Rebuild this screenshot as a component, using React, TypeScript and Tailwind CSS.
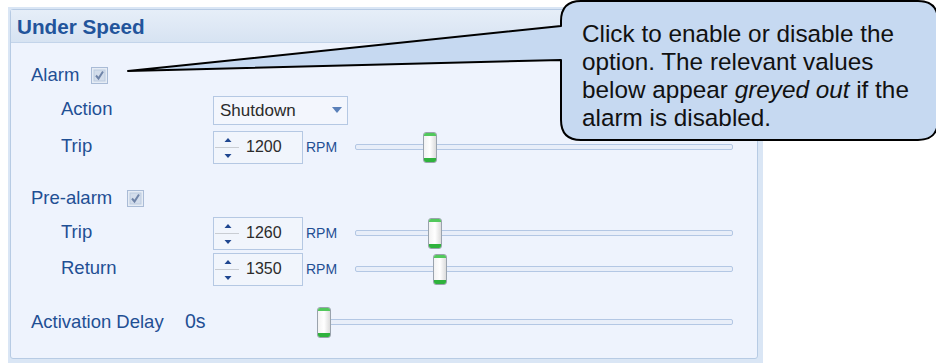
const LABEL = "text-[18.5px] leading-none text-[#1f4f94] whitespace-nowrap";
const VALUE = "text-[#2b2b2b] leading-none whitespace-nowrap";

function Checkbox({ className }: { className?: string }) {
  return (
    <svg width="17" height="17" viewBox="0 0 17 17" className={className}>
      <rect x="0.5" y="0.5" width="16" height="16" fill="#e6ecf5" stroke="#a9bbd6" />
      <rect x="3" y="3" width="11" height="11" fill="#d3ddeb" stroke="#bccbe0" />
      <path d="M5 8.5 L7.5 11.5 L12 4.5" fill="none" stroke="#6f84a8" strokeWidth="2" />
    </svg>
  );
}

function SpinBox({ value }: { value: string }) {
  return (
    <div className="flex h-[33px] w-[90px] items-center border border-[#b5c8e3] bg-[#f1f5fc]">
      <svg width="26" height="31" viewBox="0 0 26 31">
        <line x1="1" y1="15.5" x2="25" y2="15.5" stroke="#c9cdd3" />
        <polygon points="10.5,10 17.5,10 14,6" fill="#1f4690" />
        <polygon points="10.5,22 17.5,22 14,26" fill="#1f4690" />
      </svg>
      <span className={`${VALUE} ml-[6px] text-[16px]`}>{value}</span>
    </div>
  );
}

function Dropdown({ value }: { value: string }) {
  return (
    <div className="flex h-[29px] w-[135px] items-center justify-between border border-[#b5c8e3] bg-[#f3f6fd] pl-[6px] pr-[5px]">
      <span className={`${VALUE} text-[17px]`}>{value}</span>
      <svg width="10" height="6" viewBox="0 0 10 6">
        <polygon points="0,0 10,0 5,6" fill="#5a80b9" />
      </svg>
    </div>
  );
}

function Slider({ className, offset }: { className: string; offset: number }) {
  return (
    <div className={`relative flex h-[31px] items-center ${className}`}>
      <div className="h-[6px] w-full rounded-[2px] border border-[#b3c7e4] bg-[#e8eef9]" />
      <div
        className="absolute top-0 flex h-[31px] w-[14px] flex-col justify-between overflow-hidden rounded-[3px] border border-[#9aa3ad] bg-linear-to-r from-[#f2f2f2] via-[#ffffff] to-[#dcdcdc]"
        style={{ left: offset }}
      >
        <div className="h-[3px] bg-[#52c85c]" />
        <div className="h-[4px] bg-[#2fb23d]" />
      </div>
    </div>
  );
}

function Row({
  label,
  sub,
  className,
  children,
}: {
  label: string;
  sub?: boolean;
  className: string;
  children?: React.ReactNode;
}) {
  return (
    <div className={`flex items-center ${className}`}>
      <div className={`w-[202px] ${sub ? "pl-[50px]" : "pl-[20px]"}`}>
        <span className={LABEL}>{label}</span>
      </div>
      {children}
    </div>
  );
}

function RpmRow({ label, value, offset, className }: { label: string; value: string; offset: number; className: string }) {
  return (
    <Row label={label} sub className={`h-[34px] ${className}`}>
      <SpinBox value={value} />
      <span className="ml-[3px] w-[31px] text-[14px] leading-none text-[#1f4f94]">RPM</span>
      <Slider className="ml-[18px] w-[378px]" offset={offset} />
    </Row>
  );
}

export default function App() {
  return (
    <div className="relative h-[363px] w-[936px] overflow-hidden bg-white pl-[8px] pt-[7px] font-['Liberation_Sans',Arial,sans-serif]">
      <div className="h-[356px] w-[755px] bg-[#dae6f5] pb-[4px] pl-[2px] pr-[5px] pt-[2px]">
        <div className="flex h-[350px] w-[748px] flex-col rounded-[3px] border border-[#b7cbe4] bg-[#eef3fd]">
          <div className="flex h-[33px] items-center border-b border-[#c3d4ea] bg-linear-to-b from-[#e6eef8] to-[#d7e3f2] pl-[6px] pt-[2px]">
            <span className="text-[20.7px] font-bold leading-none text-[#22549b]">Under Speed</span>
          </div>

          <div className="mt-[16px] flex h-[32px] items-center pl-[20px]">
            <span className={LABEL}>Alarm</span>
            <Checkbox className="ml-[12px]" />
          </div>

          <Row label="Action" sub className="mt-[4px] h-[30px]">
            <Dropdown value="Shutdown" />
          </Row>

          <RpmRow label="Trip" value="1200" offset={68} className="mt-[5px]" />

          <div className="mt-[18px] flex h-[32px] items-center pl-[20px]">
            <span className={LABEL}>Pre-alarm</span>
            <Checkbox className="ml-[15px]" />
          </div>

          <RpmRow label="Trip" value="1260" offset={73} className="mt-[2px]" />
          <RpmRow label="Return" value="1350" offset={78} className="mt-[2px]" />

          <div className="mt-[19px] flex h-[34px] items-center pl-[20px]">
            <span className={`${LABEL} w-[154px]`}>Activation Delay</span>
            <span className={`${LABEL} w-[132px] text-[19.5px]`}>0s</span>
            <Slider className="w-[416px]" offset={0} />
          </div>
        </div>
      </div>

      <svg className="pointer-events-none absolute left-0 top-0" width="936" height="363" viewBox="0 0 936 363">
        <path
          d="M128 71 L561 26 L561 21 Q561 1 581 1 L918 1 Q938 1 938 21 L938 120 Q938 140 918 140 L581 140 Q561 140 561 120 L561 60 Z"
          fill="#c6d9f1"
          stroke="#000"
          strokeWidth="2"
          strokeLinejoin="round"
        />
      </svg>
      <div className="absolute left-[582px] top-[19.5px] whitespace-nowrap text-[24.3px] leading-[28px] text-[#111]">
        Click to enable or disable the
        <br />
        option. The relevant values
        <br />
        below appear <i>greyed out</i> if the
        <br />
        alarm is disabled.
      </div>
    </div>
  );
}
